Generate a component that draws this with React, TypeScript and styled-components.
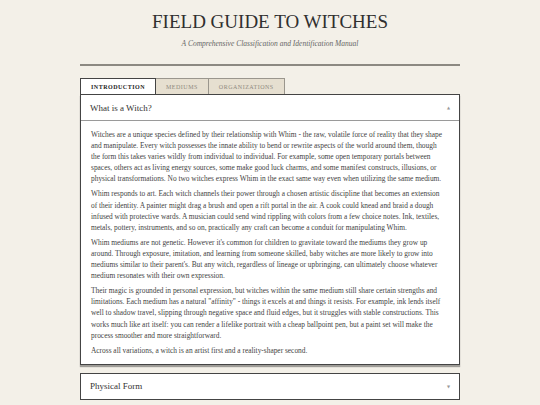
import React, { useState } from 'react';
import styled, { createGlobalStyle } from 'styled-components';

const GlobalStyle = createGlobalStyle`
  html, body {
    margin: 0;
    padding: 0;
    background: #f3f0e8;
  }
  body {
    font-family: "Liberation Serif", Georgia, serif;
    color: #333;
  }
`;

const tabs = ['Introduction', 'Mediums', 'Organizations'];

const intro: string[][] = [
  [
    'Witches are a unique species defined by their relationship with Whim - the raw, volatile force of reality that they shape',
    'and manipulate. Every witch possesses the innate ability to bend or rewrite aspects of the world around them, though',
    'the form this takes varies wildly from individual to individual. For example, some open temporary portals between',
    'spaces, others act as living energy sources, some make good luck charms, and some manifest constructs, illusions, or',
    'physical transformations. No two witches express Whim in the exact same way even when utilizing the same medium.',
  ],
  [
    'Whim responds to art. Each witch channels their power through a chosen artistic discipline that becomes an extension',
    'of their identity. A painter might drag a brush and open a rift portal in the air. A cook could knead and braid a dough',
    'infused with protective wards. A musician could send wind rippling with colors from a few choice notes. Ink, textiles,',
    'metals, pottery, instruments, and so on, practically any craft can become a conduit for manipulating Whim.',
  ],
  [
    "Whim mediums are not genetic. However it's common for children to gravitate toward the mediums they grow up",
    'around. Through exposure, imitation, and learning from someone skilled, baby witches are more likely to grow into',
    "mediums similar to their parent's. But any witch, regardless of lineage or upbringing, can ultimately choose whatever",
    'medium resonates with their own expression.',
  ],
  [
    'Their magic is grounded in personal expression, but witches within the same medium still share certain strengths and',
    'limitations. Each medium has a natural "affinity" - things it excels at and things it resists. For example, ink lends itself',
    'well to shadow travel, slipping through negative space and fluid edges, but it struggles with stable constructions. This',
    'works much like art itself: you can render a lifelike portrait with a cheap ballpoint pen, but a paint set will make the',
    'process smoother and more straightforward.',
  ],
  ['Across all variations, a witch is an artist first and a reality-shaper second.'],
];

const App = () => {
  const [active, setActive] = useState(0);
  const [open, setOpen] = useState<Record<string, boolean>>({ witch: true, form: false });

  const toggle = (key: string) => setOpen(o => ({ ...o, [key]: !o[key] }));

  return (
    <>
      <GlobalStyle />
      <Page>
        <Header>
          <Title>FIELD GUIDE TO WITCHES</Title>
          <Subtitle>A Comprehensive Classification and Identification Manual</Subtitle>
        </Header>
        <TabBar>
          {tabs.map((t, i) => (
            <Tab key={t} active={i === active} onClick={() => setActive(i)}>
              {t}
            </Tab>
          ))}
        </TabBar>
        <Section elevated>
          <SectionHead open={open.witch} onClick={() => toggle('witch')}>
            <span>What is a Witch?</span>
            <Arrow>{open.witch ? '▲' : '▼'}</Arrow>
          </SectionHead>
          {open.witch && (
            <SectionBody>
              {intro.map((lines, i) => (
                <Para key={i}>
                  {lines.map((l, j) => <Line key={j}>{l}</Line>)}
                </Para>
              ))}
            </SectionBody>
          )}
        </Section>
        <Section>
          <SectionHead open={open.form} onClick={() => toggle('form')}>
            <span>Physical Form</span>
            <Arrow>{open.form ? '▲' : '▼'}</Arrow>
          </SectionHead>
        </Section>
      </Page>
    </>
  );
};

const Page = styled.div`
  width: 380px;
  margin: 0 auto;
  padding-top: 11px;
`;

const Header = styled.header`
  text-align: center;
  border-bottom: 2px solid #8c8982;
  padding-bottom: 15px;
  margin-bottom: 12px;
`;

const Title = styled.h1`
  margin: 0;
  font-size: 19px;
  line-height: 22px;
  font-weight: normal;
  letter-spacing: 0;
  color: #2f2f2f;
`;

const Subtitle = styled.p`
  margin: 6px 0 0;
  font-size: 7.5px;
  line-height: 10px;
  font-style: italic;
  color: #666;
`;

const TabBar = styled.nav`
  display: flex;
`;

const Tab = styled.button<{ active: boolean }>`
  height: 16px;
  padding: 0 10px;
  margin: 0;
  border: 1px solid ${({ active }) => (active ? '#444' : '#9a968d')};
  border-bottom: none;
  border-left-width: ${({ active }) => (active ? '1px' : '0')};
  background: ${({ active }) => (active ? '#fff' : '#e6dfd0')};
  color: ${({ active }) => (active ? '#222' : '#8f8a80')};
  font-family: "Liberation Serif", Georgia, serif;
  font-size: 6px;
  font-weight: ${({ active }) => (active ? 'bold' : 'normal')};
  letter-spacing: 0.5px;
  text-transform: uppercase;
  cursor: pointer;

  &:first-child {
    border-left-width: 1px;
  }
`;

const Section = styled.section<{ elevated?: boolean }>`
  background: #fff;
  border: 1px solid #444;
  box-shadow: ${({ elevated }) => (elevated ? '0 2px 1px rgba(0, 0, 0, 0.35)' : 'none')};
  margin-bottom: 8px;
`;

const SectionHead = styled.div<{ open: boolean }>`
  display: flex;
  align-items: center;
  justify-content: space-between;
  height: 25px;
  padding: 0 9px;
  font-size: 9px;
  color: #333;
  border-bottom: ${({ open }) => (open ? '1px solid #9a9a9a' : 'none')};
  cursor: pointer;
`;

const Arrow = styled.span`
  font-size: 4px;
  color: #999;
  font-family: "DejaVu Sans", sans-serif;
`;

const SectionBody = styled.div`
  padding: 8px 10px 4px;
`;

const Para = styled.p`
  margin: 0 0 4px;
  font-size: 7.4px;
  line-height: 11.1px;
  color: #444;
`;

const Line = styled.span`
  display: block;
  white-space: nowrap;
`;

export default App;
